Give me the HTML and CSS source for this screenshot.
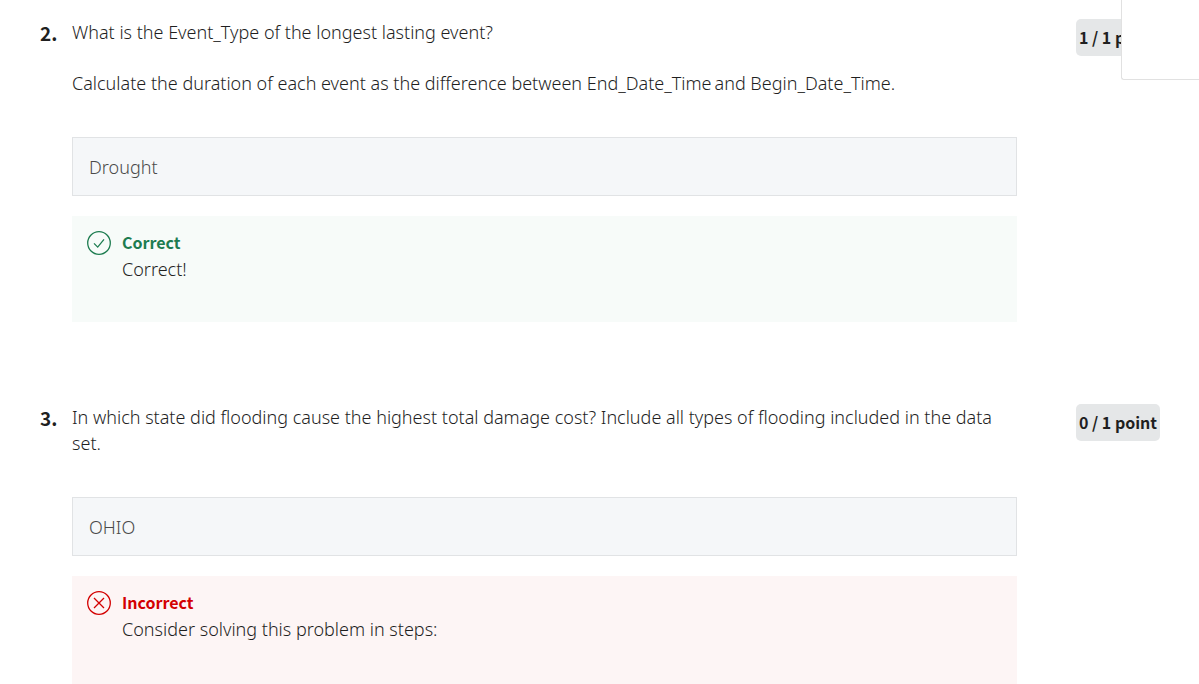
FILE: index.html
```html
<!DOCTYPE html>
<html lang="en">
<head>
<meta charset="utf-8">
<title>Quiz results</title>
<link rel="stylesheet" href="styles.css">
</head>
<body>
<main class="quiz">
  <section class="question">
    <div class="number">2.</div>
    <div class="body">
      <div class="prompt" id="q2">
        <p>What is the Event_Type of the longest lasting event?</p>
        <p>Calculate the duration of each event as the difference between End_Date_Time&#8201;and Begin_Date_Time.</p>
      </div>
      <input class="answer" type="text" value="Drought" aria-labelledby="q2" readonly>
      <div class="feedback correct">
        <svg class="icon" viewBox="0 0 24 24" aria-hidden="true"><circle cx="12" cy="12" r="11.3"/><path d="M7 12.4l3.7 3.7L17 8.4"/></svg>
        <div><strong class="verdict">Correct</strong><p>Correct!</p></div>
      </div>
    </div>
    <div class="score">1 / 1 point</div>
  </section>
  <section class="question">
    <div class="number">3.</div>
    <div class="body">
      <div class="prompt" id="q3">
        <p>In which state did flooding cause the highest total damage cost? Include all types of flooding included in the data set.</p>
      </div>
      <input class="answer" type="text" value="OHIO" aria-labelledby="q3" readonly>
      <div class="feedback incorrect">
        <svg class="icon" viewBox="0 0 24 24" aria-hidden="true"><circle cx="12" cy="12" r="11.3"/><path d="M7 7l10 10M17 7L7 17"/></svg>
        <div><strong class="verdict">Incorrect</strong><p>Consider solving this problem in steps:</p></div>
      </div>
    </div>
    <div class="score">0 / 1 point</div>
  </section>
</main>
<aside class="corner-panel"></aside>
</body>
</html>
```
FILE: styles.css
```css
* { box-sizing: border-box; }
body {
  margin: 0;
  background: #fff;
  color: #1f1f1f;
  font: 300 18px/26px "Noto Sans", "Open Sans", sans-serif;
}
p { margin: 0; }
.quiz {
  display: grid;
  gap: 82px;
  padding: 19px 39px 0 40px;
}
.question {
  display: grid;
  grid-template-columns: 32px minmax(0, 1fr) 84px;
  align-items: start;
}
.number {
  padding-top: 1px;
  font: 700 19px/26px "Noto Sans CJK SC", sans-serif;
}
.body { margin-right: 59px; }
.prompt {
  display: grid;
  gap: 25px;
  padding-right: 16px;
}
.answer {
  display: block;
  width: 100%;
  height: 59px;
  margin: 41px 0 20px;
  padding: 0 16px;
  border: 1px solid #e1e3e5;
  border-radius: 0;
  background: #f5f7f9;
  color: #4a4a4a;
  font: inherit;
}
.feedback {
  display: grid;
  grid-template-columns: 24px 1fr;
  gap: 11px;
  min-height: 106px;
  padding: 14px 15px;
}
.icon {
  width: 24px;
  height: 24px;
  margin-top: 1px;
  fill: none;
  stroke: currentColor;
  stroke-width: 1.3;
}
.correct { background: #f7fbf9; }
.incorrect { min-height: 108px; background: #fdf5f5; }
.correct .icon, .correct .verdict { color: #1d7c50; }
.incorrect .icon, .incorrect .verdict { color: #d30001; }
.verdict {
  display: block;
  padding-bottom: 2px;
  font: 700 16px/24px "Noto Sans CJK SC", sans-serif;
}
.score {
  padding: 5px 0;
  border-radius: 5px;
  background: #e5e7e8;
  font: 700 16px/27px "Noto Sans CJK SC", sans-serif;
  text-align: center;
  white-space: nowrap;
}
.corner-panel {
  position: absolute;
  top: 0;
  right: 0;
  width: 78px;
  height: 80px;
  border: 1px solid #e1e1e1;
  border-width: 0 0 1px 1px;
  border-bottom-left-radius: 3px;
  background: #fff;
}
```
